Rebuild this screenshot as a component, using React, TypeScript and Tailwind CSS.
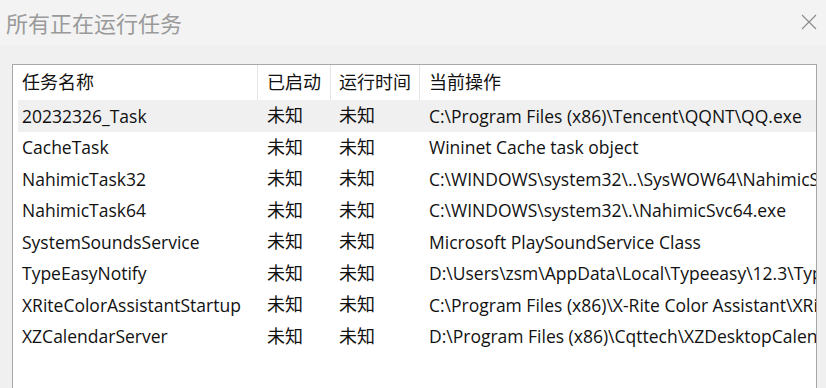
import React from 'react';

interface TaskRow {
  name: string;
  started: string;
  runtime: string;
  action: string;
}

const rows: TaskRow[] = [
  { name: '20232326_Task', started: '未知', runtime: '未知', action: 'C:\\Program Files (x86)\\Tencent\\QQNT\\QQ.exe' },
  { name: 'CacheTask', started: '未知', runtime: '未知', action: 'Wininet Cache task object' },
  { name: 'NahimicTask32', started: '未知', runtime: '未知', action: 'C:\\WINDOWS\\system32\\..\\SysWOW64\\NahimicSvc32.exe' },
  { name: 'NahimicTask64', started: '未知', runtime: '未知', action: 'C:\\WINDOWS\\system32\\.\\NahimicSvc64.exe' },
  { name: 'SystemSoundsService', started: '未知', runtime: '未知', action: 'Microsoft PlaySoundService Class' },
  { name: 'TypeEasyNotify', started: '未知', runtime: '未知', action: 'D:\\Users\\zsm\\AppData\\Local\\Typeeasy\\12.3\\TypeEasyNotify.exe' },
  { name: 'XRiteColorAssistantStartup', started: '未知', runtime: '未知', action: 'C:\\Program Files (x86)\\X-Rite Color Assistant\\XRiteColorAssistant.exe' },
  { name: 'XZCalendarServer', started: '未知', runtime: '未知', action: 'D:\\Program Files (x86)\\Cqttech\\XZDesktopCalendar\\XZCalendarServer.exe' },
];

export default function App() {
  return (
    <div className="w-[826px] h-[388px] bg-[#f0f0f0] overflow-hidden flex flex-col font-['Open_Sans','Noto_Sans_CJK_SC',sans-serif] text-[#111]">
      {/* Title bar */}
      <div className="h-[45px] shrink-0 bg-[#f3f3f3] flex items-center justify-between pl-[6px] pr-[8px]">
        <span className="text-[22px] text-[#9a9a9a] font-['Noto_Sans_CJK_SC',sans-serif] leading-none -mt-[2px]">所有正在运行任务</span>
        <svg width="16" height="16" viewBox="0 0 16 16" className="mr-[1px] -mt-[2px]">
          <path d="M1 1L15 15M15 1L1 15" stroke="#8a8a8a" strokeWidth="1.1" fill="none" />
        </svg>
      </div>

      {/* Task list */}
      <div className="mt-[19px] ml-[12px] mr-[9px] flex-1 bg-white border border-[#a8a8a8] border-b-0 overflow-hidden">
        <div className="flex h-[35px] pl-[5px] text-[18px] whitespace-nowrap">
          <div className="w-[240px] shrink-0 pl-[4px] flex items-center border-r border-[#e5e5e5]">任务名称</div>
          <div className="w-[73px] shrink-0 pl-[9px] flex items-center border-r border-[#e5e5e5]">已启动</div>
          <div className="w-[89px] shrink-0 pl-[8px] flex items-center border-r border-[#e5e5e5]">运行时间</div>
          <div className="flex-1 pl-[9px] flex items-center">当前操作</div>
        </div>
        <div className="flex flex-col">
          {rows.map((r, i) => (
            <div
              key={r.name}
              className={`flex h-[31.5px] ml-[5px] items-center text-[17.5px] whitespace-nowrap ${i === 0 ? 'bg-[#f0f0f0]' : ''}`}
            >
              <div className="w-[240px] shrink-0 pl-[4px]">{r.name}</div>
              <div className="w-[73px] shrink-0 pl-[9px] text-[18px]">{r.started}</div>
              <div className="w-[89px] shrink-0 pl-[8px] text-[18px]">{r.runtime}</div>
              <div className="flex-1 min-w-0 pl-[9px] overflow-hidden">{r.action}</div>
            </div>
          ))}
        </div>
      </div>
    </div>
  );
}
